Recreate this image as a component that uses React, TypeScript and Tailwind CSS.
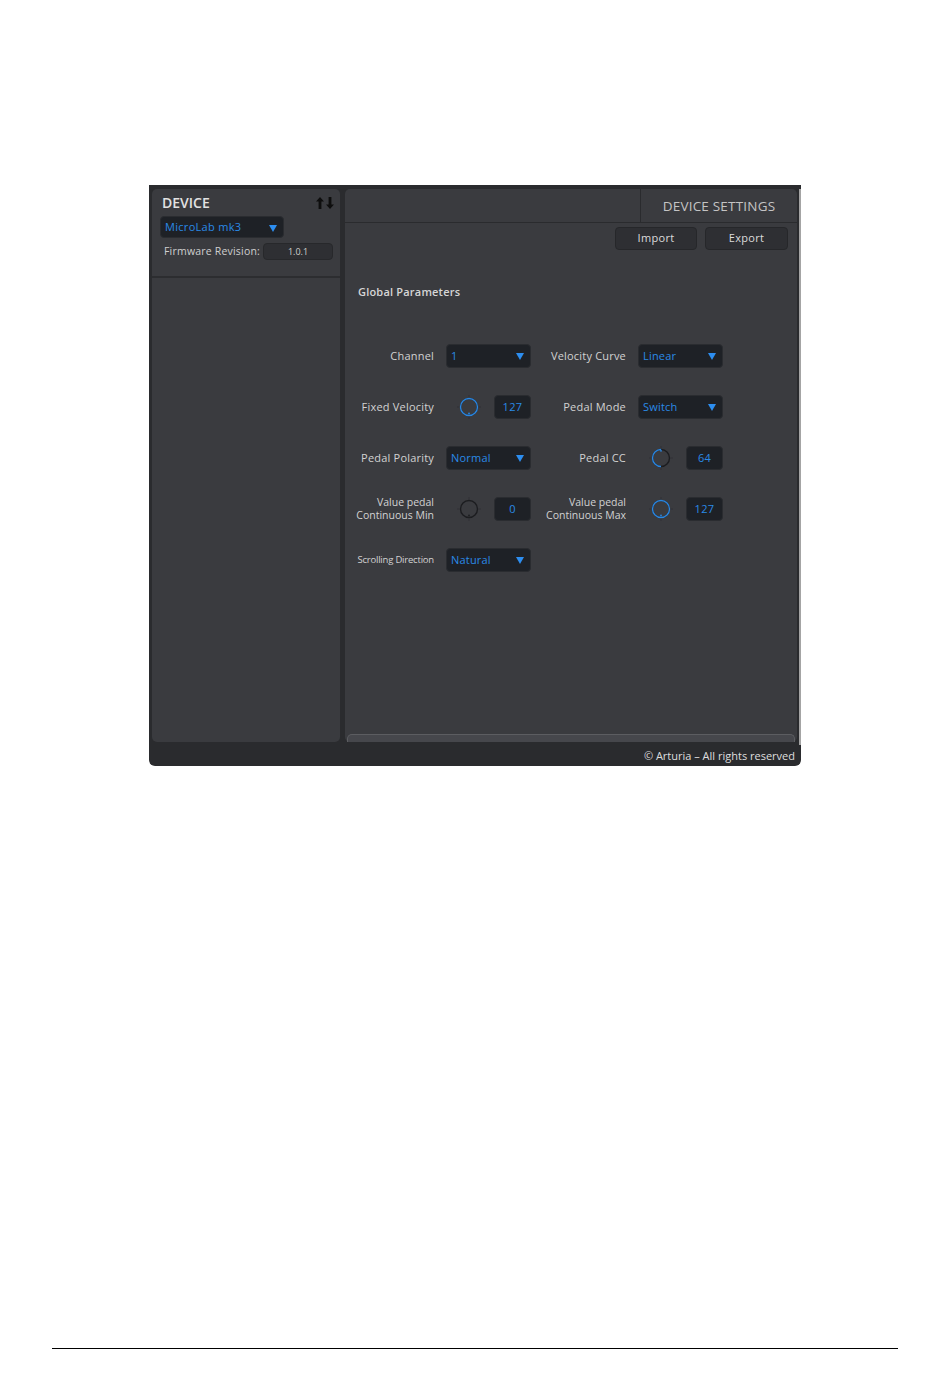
import React from "react";

const font = { fontFamily: '"Open Sans", "DejaVu Sans", sans-serif' };

function Caret() {
  return (
    <svg width="8" height="8" viewBox="0 0 8 8" className="shrink-0">
      <path d="M0 1 L8 1 L4 8 Z" fill="#2d8ef0" />
    </svg>
  );
}

function Dropdown({ value, width = "w-[85px]" }: { value: string; width?: string }) {
  return (
    <div
      className={`${width} flex h-[24px] items-center justify-between rounded-[4px] border border-[#2a2c30] bg-[#1e2126] pl-[4px] pr-[6px] pt-[1px] text-[11px] tracking-[0.2px] text-[#2a8ae6]`}
    >
      <span>{value}</span>
      <Caret />
    </div>
  );
}

// knob: amount 0..1 of the arc in blue, pointer at top for 0.5, bottom otherwise
function Knob({ amount }: { amount: number }) {
  const r = 8.5;
  const c = 2 * Math.PI * r;
  const pointerTop = amount > 0 && amount < 1;
  return (
    <svg width="26" height="26" viewBox="0 0 26 26">
      <g stroke="#303136" strokeWidth="1">
        <line x1="13" y1="1" x2="13" y2="3.5" />
        <line x1="13" y1="22.5" x2="13" y2="25" />
        <line x1="1" y1="13" x2="3.5" y2="13" />
        <line x1="22.5" y1="13" x2="25" y2="13" />
      </g>
      <circle cx="13" cy="13" r={r} fill="none" stroke="#1c1d20" strokeWidth="1.4" />
      {amount > 0 && (
        <circle
          cx="13"
          cy="13"
          r={r}
          fill="none"
          stroke="#2a86e0"
          strokeWidth="1.4"
          strokeDasharray={`${c * amount} ${c}`}
          transform="rotate(90 13 13)"
        />
      )}
      <circle
        cx="13"
        cy={pointerTop ? 5.8 : 19.5}
        r="0.9"
        fill={amount > 0 ? "#2a86e0" : "#1c1d20"}
      />
    </svg>
  );
}

function KnobBox({ value, amount }: { value: string; amount: number }) {
  return (
    <div className="flex h-[24px] w-[85px] items-center">
      <div className="ml-[10px] flex items-center">
        <Knob amount={amount} />
      </div>
      <div className="ml-auto flex h-[24px] w-[37px] items-center justify-center rounded-[4px] border border-[#2a2c30] bg-[#1e2126] pt-[1px] text-[11px] tracking-[0.3px] text-[#2a8ae6]">
        {value}
      </div>
    </div>
  );
}

function Label({ children, w, className = "" }: { children: React.ReactNode; w: string; className?: string }) {
  return (
    <div className={`${w} whitespace-nowrap pr-[12px] text-right leading-[13px] text-[#d2d2d2] ${className}`}>
      {children}
    </div>
  );
}

export default function App() {
  return (
    <div className="flex h-[1374px] w-[950px] flex-col bg-white" style={font}>
      <div className="ml-[149px] mt-[185px] flex h-[581px] w-[652px] flex-col rounded-b-[6px] bg-[#2a2b2e]">
        <div className="flex h-[560px] pl-[3px] pt-[4px]">
          {/* left column */}
          <div className="flex h-[553px] w-[188px] flex-col rounded-[5px] bg-[#3a3b3f]">
            <div className="flex items-center justify-between pl-[10px] pr-[6px] pt-[6px]">
              <span className="text-[14px] font-semibold leading-[16px] text-[#e2e2e2]">DEVICE</span>
              <svg width="18" height="12" viewBox="0 0 18 12">
                <path d="M4 0 L8 4.5 L5.4 4.5 L5.4 12 L2.6 12 L2.6 4.5 L0 4.5 Z" fill="#0e0e0e" />
                <path d="M14 12 L18 7.5 L15.4 7.5 L15.4 0 L12.6 0 L12.6 7.5 L10 7.5 Z" fill="#0e0e0e" />
              </svg>
            </div>
            <div className="mt-[5px] pl-[8px]">
              <div className="flex h-[22px] w-[124px] items-center justify-between rounded-[4px] border border-[#2a2c30] bg-[#1e2126] pl-[4px] pr-[6px] pt-[1px] text-[11px] tracking-[0.3px] text-[#2a8ae6]">
                <span>MicroLab mk3</span>
                <Caret />
              </div>
            </div>
            <div className="mt-[5px] flex items-center pl-[12px]">
              <span className="w-[99px] text-[10.5px] tracking-[0.2px] text-[#cfcfcf]">Firmware Revision:</span>
              <div className="flex h-[17px] w-[70px] items-center justify-center rounded-[4px] border border-[#27282b] bg-[#2e2f33] text-[9px] text-[#cfcfcf]">
                1.0.1
              </div>
            </div>
            <div className="mt-[16px] h-[2px] bg-[#2c2d30]" />
          </div>

          {/* right column */}
          <div className="ml-[5px] flex h-[553px] w-[452px] flex-col rounded-[5px] bg-[#3a3b3f]">
            <div className="flex h-[34px] border-b border-[#2a2b2e]">
              <div className="w-[296px] border-r border-[#2a2b2e]" />
              <div className="flex flex-1 items-center justify-center pt-[2px] text-[13.5px] font-medium tracking-[0.2px] text-[#c4c4c4]">
                DEVICE SETTINGS
              </div>
            </div>
            <div className="flex justify-end gap-[8px] pr-[9px] pt-[4px]">
              <button className="h-[23px] w-[82px] rounded-[4px] border border-[#26272a] bg-[#2e2f33] text-[11px] tracking-[0.3px] text-[#dcdcdc]">
                Import
              </button>
              <button className="h-[23px] w-[83px] rounded-[4px] border border-[#26272a] bg-[#2e2f33] text-[11px] tracking-[0.3px] text-[#dcdcdc]">
                Export
              </button>
            </div>
            <div className="mt-[34px] pl-[13px] text-[11px] font-semibold tracking-[0.2px] text-[#d6d6d6]">Global Parameters</div>

            <div className="mt-[43px] flex flex-col gap-[27px]">
              <div className="flex h-[24px] items-center">
                <Label w="w-[101px]" className="text-[11px] tracking-[0.2px]">Channel</Label>
                <Dropdown value="1" />
                <Label w="w-[107px]" className="text-[11px] tracking-[0.2px]">Velocity Curve</Label>
                <Dropdown value="Linear" />
              </div>
              <div className="flex h-[24px] items-center">
                <Label w="w-[101px]" className="text-[11px] tracking-[0.2px]">Fixed Velocity</Label>
                <KnobBox value="127" amount={1} />
                <Label w="w-[107px]" className="text-[11px] tracking-[0.2px]">Pedal Mode</Label>
                <Dropdown value="Switch" />
              </div>
              <div className="flex h-[24px] items-center">
                <Label w="w-[101px]" className="text-[11px] tracking-[0.2px]">Pedal Polarity</Label>
                <Dropdown value="Normal" />
                <Label w="w-[107px]" className="text-[11px] tracking-[0.2px]">Pedal CC</Label>
                <KnobBox value="64" amount={0.5} />
              </div>
              <div className="flex h-[24px] items-center">
                <Label w="w-[101px]" className="text-[10.5px] tracking-[0px]">
                  Value pedal
                  <br />
                  Continuous Min
                </Label>
                <KnobBox value="0" amount={0} />
                <Label w="w-[107px]" className="text-[10.5px] tracking-[0px]">
                  Value pedal
                  <br />
                  Continuous Max
                </Label>
                <KnobBox value="127" amount={1} />
              </div>
              <div className="flex h-[24px] items-center">
                <Label w="w-[101px]" className="text-[9.5px] tracking-[-0.2px]">
                  Scrolling Direction
                </Label>
                <Dropdown value="Natural" />
              </div>
            </div>

            <div className="mt-auto px-[2px]">
              <div className="h-[8px] rounded-t-[5px] border border-b-0 border-[#5c5d61] bg-[#46474c]" />
            </div>
          </div>
          <div className="ml-[2px] h-[556px] w-[2px] bg-[#a4a4a4]" />
        </div>
        <div className="flex flex-1 items-end justify-end pb-[2px] pr-[6px] text-[11px] text-[#dedede]">
          © Arturia – All rights reserved
        </div>
      </div>
      <div className="ml-[52px] mt-[582px] h-px w-[846px] bg-black" />
    </div>
  );
}
